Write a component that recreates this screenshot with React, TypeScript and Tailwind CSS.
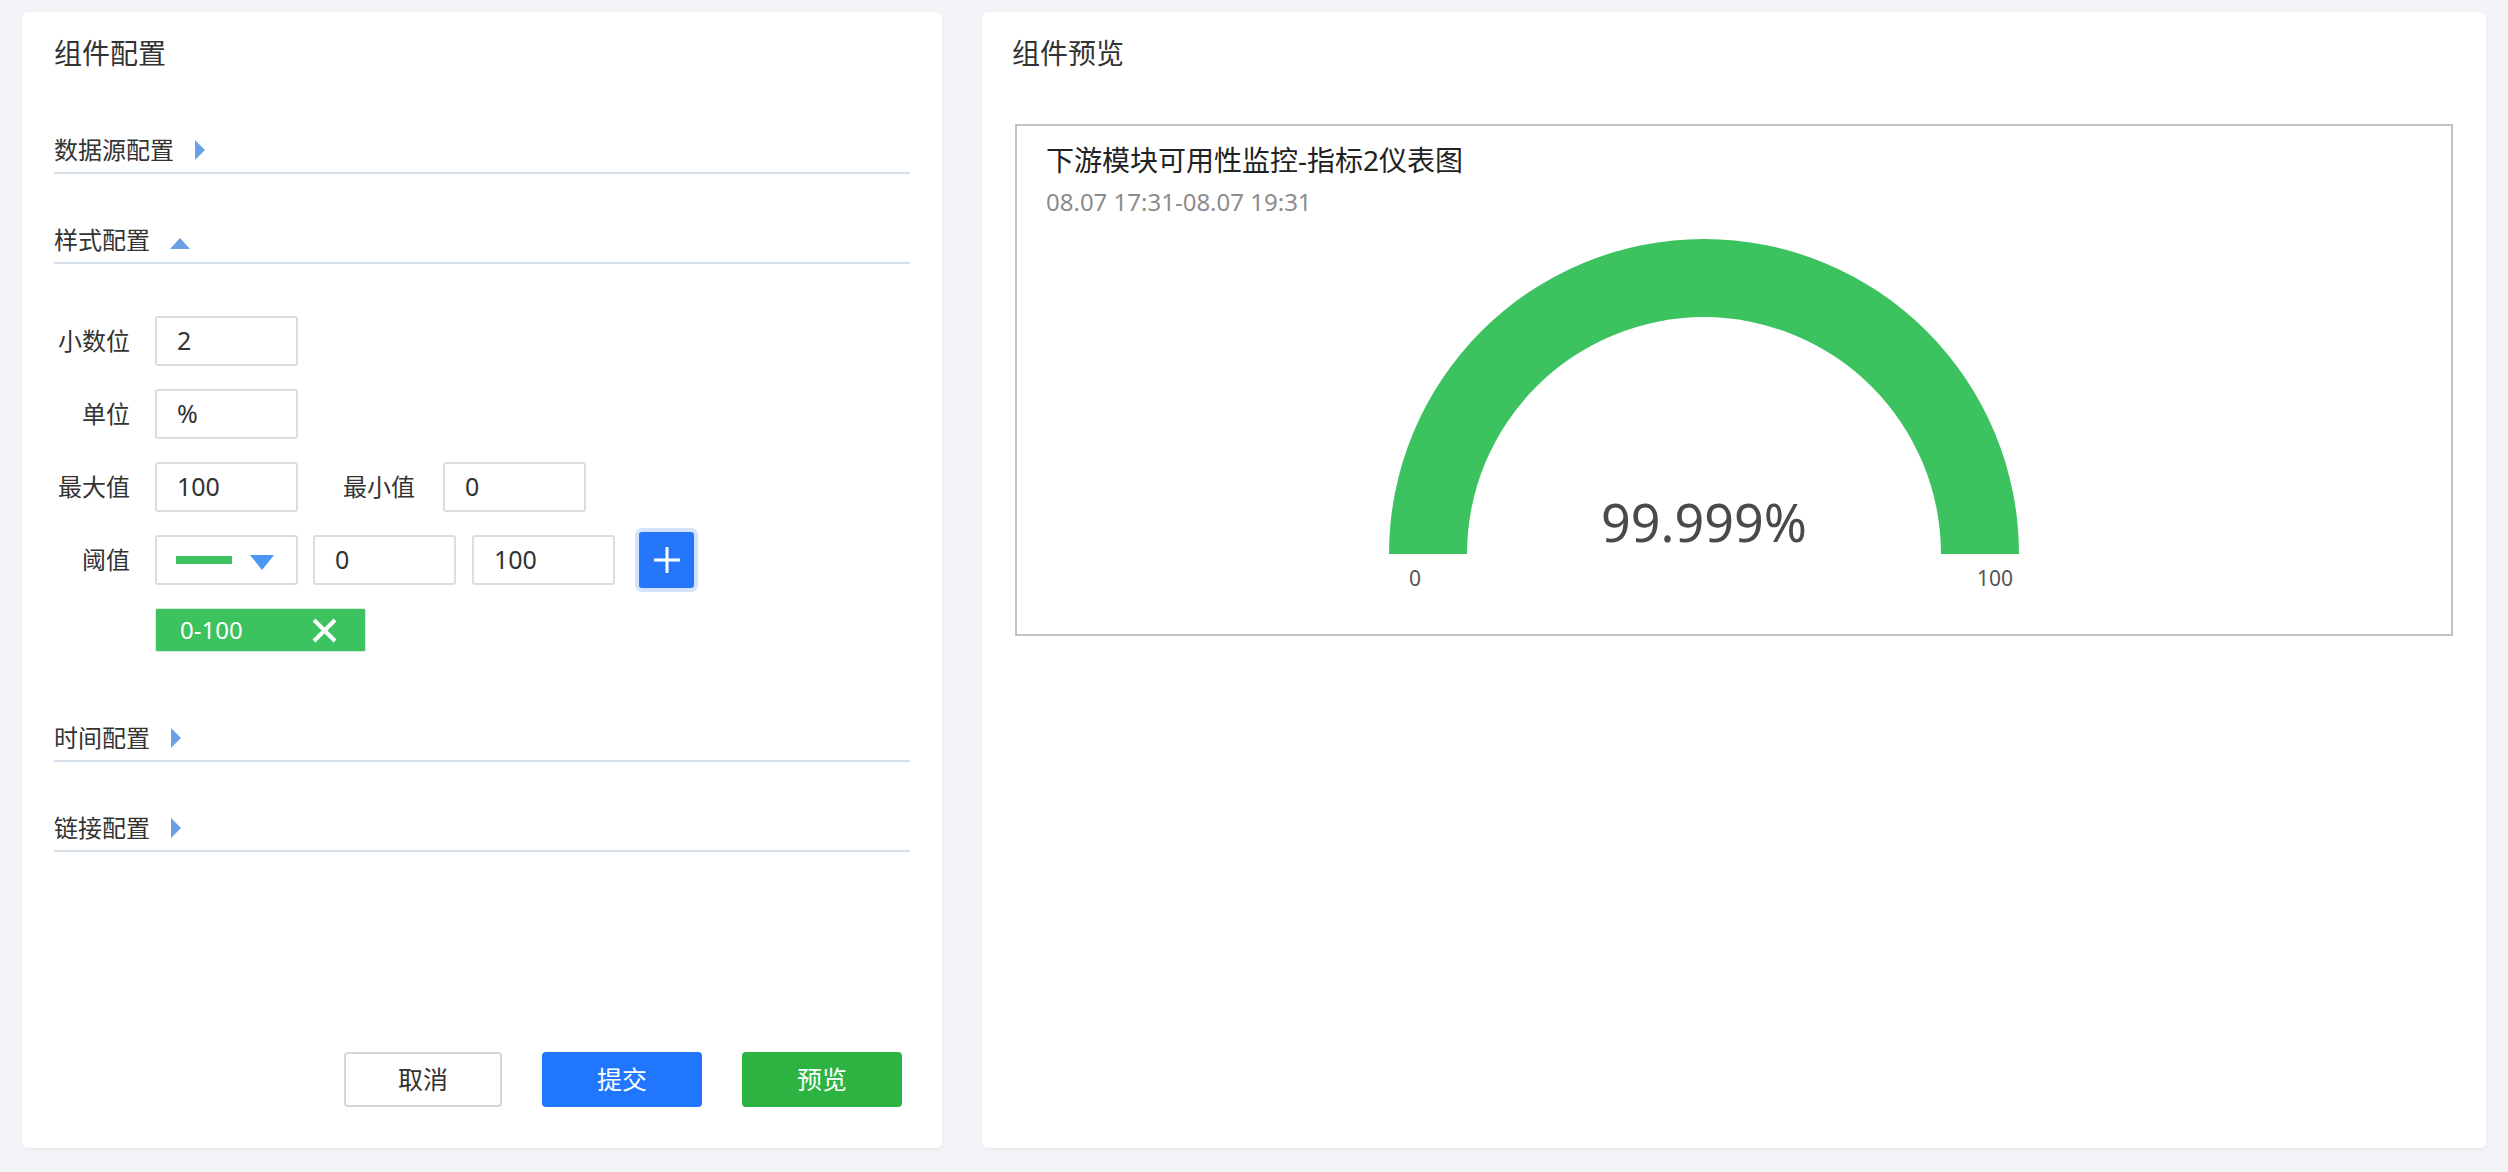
const font = { fontFamily: '"Noto Sans", "Noto Sans CJK SC", sans-serif' }

function SectionHeader({ title, open, className }: { title: string; open?: boolean; className?: string }) {
    return (
        <div className={`flex items-center border-b-2 border-[#d6e0eb] pb-[5px] ${className ?? ''}`}>
            <span className="text-[24px] leading-[34px] text-[#333]">{title}</span>
            {open ? (
                <span className="ml-[20px] mt-[6px] h-0 w-0 border-x-[10px] border-b-[11px] border-x-transparent border-b-[#6a9fe3]" />
            ) : (
                <span className="ml-[21px] h-0 w-0 border-y-[10px] border-l-[10px] border-y-transparent border-l-[#6a9fe3]" />
            )}
        </div>
    )
}

function Field({ value, className }: { value: string; className?: string }) {
    return (
        <div className={`flex h-[50px] w-[143px] items-center rounded-[3px] border-2 border-[#dcdcdc] pl-[20px] text-[25px] text-[#333] ${className ?? ''}`}>
            {value}
        </div>
    )
}

function Label({ text }: { text: string }) {
    return <div className="flex w-[76px] shrink-0 justify-end whitespace-nowrap text-[24px] text-[#333]">{text}</div>
}

function Gauge() {
    return (
        <svg width="700" height="380" viewBox="0 0 700 380">
            <path d="M 35 330 A 315 315 0 0 1 665 330 L 587 330 A 237 237 0 0 0 113 330 Z" fill="#3cc35f" />
            <text x="350" y="318" textAnchor="middle" fontSize="52" fill="#4a4a4a" style={font}>99.999%</text>
            <text x="55" y="362" fontSize="21" fill="#555" style={font}>0</text>
            <text x="659" y="362" textAnchor="end" fontSize="21" fill="#555" style={font}>100</text>
        </svg>
    )
}

export default function App() {
    return (
        <div style={font} className="flex h-[1172px] w-full gap-[40px] bg-[#f3f4f8] px-[22px] pb-[24px] pt-[12px]">
            {/* config panel */}
            <div className="flex w-[920px] flex-col rounded-[6px] bg-white px-[32px] pb-[41px] pt-[16px] shadow-[0_1px_4px_rgba(0,0,0,0.06)]">
                <div className="h-[50px] text-[28px] leading-[50px] text-[#333]">组件配置</div>

                <SectionHeader title="数据源配置" className="mt-[55px]" />
                <SectionHeader title="样式配置" open className="mt-[49px]" />

                <div className="mt-[52px] flex flex-col gap-[23px]">
                    <div className="flex items-center gap-[25px]">
                        <Label text="小数位" />
                        <Field value="2" />
                    </div>
                    <div className="flex items-center gap-[25px]">
                        <Label text="单位" />
                        <Field value="%" />
                    </div>
                    <div className="flex items-center gap-[25px]">
                        <Label text="最大值" />
                        <Field value="100" />
                        <div className="ml-[20px] whitespace-nowrap text-[24px] text-[#333]">最小值</div>
                        <Field value="0" className="ml-[3px]" />
                    </div>
                    <div className="flex h-[50px] items-center">
                        <Label text="阈值" />
                        <div className="ml-[25px] flex h-[50px] w-[143px] items-center rounded-[3px] border-2 border-[#dcdcdc] pl-[19px]">
                            <span className="h-[8px] w-[56px] bg-[#3cc35f]" />
                            <span className="ml-[18px] mt-[4px] h-0 w-0 border-x-[12px] border-t-[15px] border-x-transparent border-t-[#4b97f4]" />
                        </div>
                        <Field value="0" className="ml-[15px] w-[142px]" />
                        <Field value="100" className="ml-[16px] w-[142px]" />
                        <button className="ml-[24px] flex h-[56px] w-[55px] shrink-0 items-center justify-center rounded-[3px] bg-[#2476fb] text-white ring-4 ring-[#d3e3fc]">
                            <svg width="26" height="26" viewBox="0 0 26 26" stroke="currentColor" strokeWidth="3">
                                <path d="M13 0v26M0 13h26" />
                            </svg>
                        </button>
                    </div>
                    <div className="flex">
                        <div className="ml-[101px] flex h-[44px] w-[211px] items-center rounded-[2px] border border-[#d7ecdc] bg-[#3cc25e] pl-[24px] text-[24px] text-white">
                            <span>0-100</span>
                            <svg width="25" height="25" viewBox="0 0 25 25" stroke="currentColor" strokeWidth="4" className="ml-[69px]">
                                <path d="M2 2l21 21M23 2L2 23" />
                            </svg>
                        </div>
                    </div>
                </div>

                <SectionHeader title="时间配置" className="mt-[69px]" />
                <SectionHeader title="链接配置" className="mt-[49px]" />

                <div className="mt-auto flex justify-end gap-[40px] pr-[8px]">
                    <button className="h-[55px] w-[158px] rounded-[4px] border-2 border-[#d6d6d6] bg-white text-[25px] text-[#333]">取消</button>
                    <button className="h-[55px] w-[160px] rounded-[4px] bg-[#2176ff] text-[25px] text-white">提交</button>
                    <button className="h-[55px] w-[160px] rounded-[4px] bg-[#2db342] text-[25px] text-white">预览</button>
                </div>
            </div>

            {/* preview panel */}
            <div className="flex flex-1 flex-col rounded-[6px] bg-white px-[33px] pt-[16px] shadow-[0_1px_4px_rgba(0,0,0,0.06)]">
                <div className="-ml-[3px] h-[50px] text-[28px] leading-[50px] text-[#333]">组件预览</div>
                <div className="mt-[46px] flex flex-col border-2 border-[#c4c4c4] px-[29px] pb-[30px] pt-[14px]">
                    <div className="text-[28px] leading-[40px] text-[#222]">下游模块可用性监控-指标2仪表图</div>
                    <div className="mt-[5px] text-[24px] leading-[34px] text-[#8c8c8c]">08.07 17:31-08.07 19:31</div>
                    <div className="mt-[5px] flex justify-center pr-[60px]">
                        <Gauge />
                    </div>
                </div>
            </div>
        </div>
    )
}
